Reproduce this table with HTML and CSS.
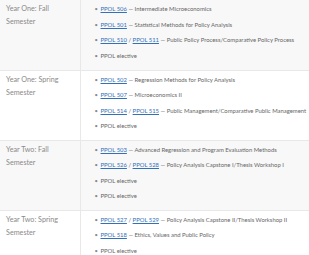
FILE: index.html
```html
<!DOCTYPE html>
<html>
<head>
<meta charset="utf-8">
<link rel="stylesheet" href="styles.css">
</head>
<body>
<table class="plan">
  <tr class="row alt">
    <th class="term">Year One: Fall Semester</th>
    <td class="courses">
      <ul>
        <li><a href="#">PPOL 506</a> — Intermediate Microeconomics</li>
        <li><a href="#">PPOL 501</a> — Statistical Methods for Policy Analysis</li>
        <li><a href="#">PPOL 510</a> / <a href="#">PPOL 511</a> — Public Policy Process/Comparative Policy Process</li>
        <li>PPOL elective</li>
      </ul>
    </td>
  </tr>
  <tr class="row">
    <th class="term">Year One: Spring Semester</th>
    <td class="courses">
      <ul>
        <li><a href="#">PPOL 502</a> — Regression Methods for Policy Analysis</li>
        <li><a href="#">PPOL 507</a> — Microeconomics II</li>
        <li><a href="#">PPOL 514</a> / <a href="#">PPOL 515</a> — Public Management/Comparative Public Management</li>
        <li>PPOL elective</li>
      </ul>
    </td>
  </tr>
  <tr class="row alt">
    <th class="term">Year Two: Fall Semester</th>
    <td class="courses">
      <ul>
        <li><a href="#">PPOL 503</a> — Advanced Regression and Program Evaluation Methods</li>
        <li><a href="#">PPOL 526</a> / <a href="#">PPOL 528</a> — Policy Analysis Capstone I/Thesis Workshop I</li>
        <li>PPOL elective</li>
        <li>PPOL elective</li>
      </ul>
    </td>
  </tr>
  <tr class="row">
    <th class="term">Year Two: Spring Semester</th>
    <td class="courses">
      <ul>
        <li><a href="#">PPOL 527</a> / <a href="#">PPOL 529</a> — Policy Analysis Capstone II/Thesis Workshop II</li>
        <li><a href="#">PPOL 518</a> — Ethics, Values and Public Policy</li>
        <li>PPOL elective</li>
        <li>PPOL elective</li>
      </ul>
    </td>
  </tr>
</table>
</body>
</html>
```

FILE: styles.css
```css
html, body {
  margin: 0;
  padding: 0;
  background: #ffffff;
  font-family: "Lato", "Open Sans", sans-serif;
  color: #555555;
  overflow: hidden;
}
.plan {
  border-collapse: collapse;
  width: 330px;
}
.row {
  height: 70px;
  border-bottom: 1px solid #e8e8e8;
}
.row.alt {
  background: #f8f8f8;
}
.term {
  width: 80px;
  box-sizing: border-box;
  vertical-align: top;
  text-align: left;
  font-weight: normal;
  font-size: 7.2px;
  line-height: 13px;
  color: #8a8a8a;
  padding: 2px 8px 0 6px;
  border-right: 1px solid #e8e8e8;
}
.courses {
  vertical-align: top;
  padding: 1px 0 0 0;
}
.courses ul {
  margin: 0;
  padding: 0 0 0 14px;
  list-style: none;
}
.courses li {
  font-size: 5.9px;
  line-height: 15.5px;
  color: #666666;
  white-space: nowrap;
}
.courses li::before {
  content: "•";
  display: inline-block;
  width: 6px;
  color: #888888;
}
.courses a {
  color: #3370b8;
  text-decoration: underline;
}
```
